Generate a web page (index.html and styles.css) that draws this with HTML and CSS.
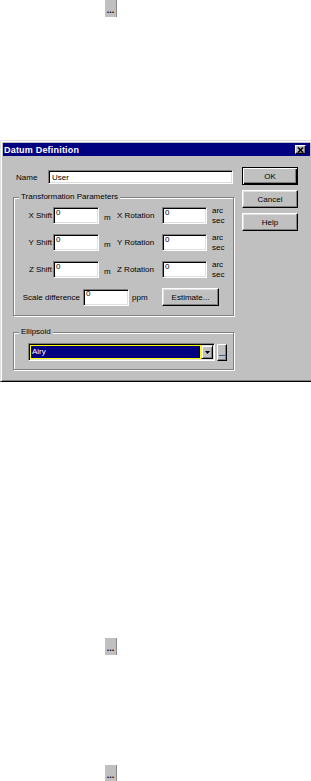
FILE: index.html
```html
<!DOCTYPE html>
<html lang="en">
<head>
    <meta charset="UTF-8">
    <meta name="viewport" content="width=device-width, initial-scale=1.0">
    <title>Datum Definition</title>
    <link rel="stylesheet" href="styles.css">
</head>
<body>
    <button class="more-btn more-top" type="button">...</button>

    <div class="dialog">
        <div class="titlebar">
            <span class="title">Datum Definition</span>
            <button class="close-btn" type="button" aria-label="Close">
                <svg width="7" height="6" viewBox="0 0 7 6"><path d="M1 0.5 L6 5.5 M6 0.5 L1 5.5" stroke="#000" stroke-width="1.6" fill="none"/></svg>
            </button>
        </div>
        <div class="dialog-body">
            <div class="main">
                <div class="name-row">
                    <label for="name">Name</label>
                    <input id="name" class="field field-name" value="User">
                </div>

                <div class="group group-params">
                    <div class="group-title">Transformation Parameters</div>
                    <div class="param-row">
                        <label class="lbl">X Shift</label>
                        <input class="field" value="0">
                        <span class="unit">m</span>
                        <label class="lbl-rot">X Rotation</label>
                        <input class="field field-rot" value="0">
                        <span class="arc">arc<br>sec</span>
                    </div>
                    <div class="param-row">
                        <label class="lbl">Y Shift</label>
                        <input class="field" value="0">
                        <span class="unit">m</span>
                        <label class="lbl-rot">Y Rotation</label>
                        <input class="field field-rot" value="0">
                        <span class="arc">arc<br>sec</span>
                    </div>
                    <div class="param-row">
                        <label class="lbl">Z Shift</label>
                        <input class="field" value="0">
                        <span class="unit">m</span>
                        <label class="lbl-rot">Z Rotation</label>
                        <input class="field field-rot" value="0">
                        <span class="arc">arc<br>sec</span>
                    </div>
                    <div class="param-row scale-row">
                        <label class="lbl-scale">Scale difference</label>
                        <input class="field" value="0">
                        <span class="unit-ppm">ppm</span>
                        <button class="btn btn-estimate" type="button">Estimate...</button>
                    </div>
                </div>

                <div class="group group-ellipsoid">
                    <div class="group-title">Ellipsoid</div>
                    <div class="ellipsoid-row">
                        <div class="combo">
                            <span class="combo-value">Airy</span>
                            <span class="combo-arrow">
                                <svg width="5" height="3" viewBox="0 0 5 3"><polygon points="0,0 5,0 2.5,3" fill="#000"/></svg>
                            </span>
                        </div>
                        <button class="small-btn" type="button">...</button>
                    </div>
                </div>
            </div>

            <div class="actions">
                <button class="btn btn-default" type="button">OK</button>
                <button class="btn" type="button">Cancel</button>
                <button class="btn" type="button">Help</button>
            </div>
        </div>
    </div>

    <button class="more-btn more-mid" type="button">...</button>
    <button class="more-btn more-bottom" type="button">...</button>
</body>
</html>
```

FILE: styles.css
```css
html, body {
    overflow: hidden;
}
body {
    margin: 0;
    background: #fff;
    font-family: "Liberation Sans", Arial, sans-serif;
    font-size: 8px;
    color: #000;
}
button, input {
    font-family: inherit;
    font-size: 8px;
    color: #000;
    margin: 0;
}

/* loose "..." buttons on the page */
.more-btn {
    display: block;
    width: 12px;
    height: 17px;
    margin-left: 105px;
    padding: 4px 0 0;
    border: none;
    border-right: 1px solid #8a8a8a;
    background: #c0c0c0;
    font-size: 9px;
    font-weight: bold;
    line-height: 9px;
    text-align: center;
}
.more-mid {
    margin-top: 256px;
}
.more-bottom {
    margin-top: 110px;
}

/* dialog frame */
.dialog {
    width: 313px;
    margin-top: 123px;
    box-sizing: border-box;
    padding: 2px;
    background: #c0c0c0;
    border: 1px solid;
    border-color: #dfdfdf #000 #000 #dfdfdf;
    box-shadow: inset 1px 1px #fff, inset -1px -1px #808080;
}
.titlebar {
    display: flex;
    align-items: center;
    justify-content: space-between;
    height: 13px;
    padding: 0 4px 0 1px;
    background: #000080;
}
.title {
    color: #fff;
    font-size: 9px;
    font-weight: bold;
    letter-spacing: 0.2px;
}
.close-btn {
    display: flex;
    align-items: center;
    justify-content: center;
    width: 11px;
    height: 9px;
    padding: 0;
    background: #c0c0c0;
    border: 1px solid;
    border-color: #fff #000 #000 #fff;
    box-shadow: inset -1px -1px #808080;
}

.dialog-body {
    display: flex;
    gap: 8px;
    padding: 11px 0 9px 10px;
}
.main {
    width: 221px;
}

/* sunken edit fields */
.field {
    box-sizing: border-box;
    width: 46px;
    height: 17px;
    padding: 0 2px 7px;
    background: #fff;
    border: 1px solid;
    border-color: #808080 #fff #fff #808080;
    box-shadow: inset 1px 1px #000, inset -1px -1px #dfdfdf;
    outline: none;
}

.name-row {
    display: flex;
    align-items: center;
    height: 14px;
    margin-top: 3px;
}
.name-row label {
    width: 35px;
    padding-left: 3px;
    box-sizing: border-box;
}
.field-name {
    width: 185px;
    height: 14px;
    padding: 0 3px;
}

/* etched group boxes */
.group {
    margin-top: 13px;
    border: 1px solid #808080;
    box-shadow: 1px 1px #fff, inset 1px 1px #fff;
}
.group-title {
    width: fit-content;
    margin: -6px 0 0 5px;
    padding: 0 2px;
    line-height: 10px;
    background: #c0c0c0;
}
.group-params {
    padding-bottom: 9px;
}
.group-ellipsoid {
    margin-top: 16px;
    padding-bottom: 8px;
}

.param-row {
    display: flex;
    align-items: center;
    height: 17px;
    margin-top: 10px;
}
.group-title + .param-row {
    margin-top: 5px;
}
.lbl {
    width: 39px;
    padding-right: 1px;
    box-sizing: border-box;
    text-align: right;
}
.unit {
    width: 18px;
    padding: 4px 0 0 5px;
    box-sizing: border-box;
}
.lbl-rot {
    width: 45px;
}
.field-rot {
    width: 45px;
}
.arc {
    margin-left: 5px;
    line-height: 10px;
}

.scale-row {
    height: 18px;
}
.lbl-scale {
    width: 69px;
    padding-right: 3px;
    box-sizing: border-box;
    text-align: right;
}
.unit-ppm {
    width: 33px;
    padding-left: 3px;
    box-sizing: border-box;
}

/* raised push buttons */
.btn {
    box-sizing: border-box;
    width: 56px;
    height: 18px;
    padding: 0;
    background: #c0c0c0;
    border: 1px solid;
    border-color: #fff #000 #000 #fff;
    box-shadow: inset -1px -1px #808080, inset 1px 1px #dfdfdf;
    text-align: center;
}
.btn-default {
    border-color: #000;
    box-shadow: inset 1px 1px #fff, inset -1px -1px #000, inset -2px -2px #808080;
}
.btn-estimate {
    width: 57px;
}
.actions {
    display: flex;
    flex-direction: column;
    gap: 5px;
}

/* ellipsoid combo */
.ellipsoid-row {
    display: flex;
    align-items: center;
    margin-top: 6px;
    padding-left: 14px;
}
.combo {
    display: flex;
    box-sizing: border-box;
    width: 187px;
    height: 18px;
    padding: 1px;
    background: #fff;
    border: 1px solid;
    border-color: #808080 #fff #fff #808080;
    box-shadow: inset 1px 1px #000, inset -1px -1px #dfdfdf;
}
.combo-value {
    flex: 1;
    padding-left: 1px;
    background: #000080;
    border: 1px solid #ffff00;
    color: #fff;
    line-height: 12px;
}
.combo-arrow {
    display: flex;
    align-items: center;
    justify-content: center;
    box-sizing: border-box;
    width: 12px;
    background: #c0c0c0;
    border: 1px solid;
    border-color: #dfdfdf #000 #000 #dfdfdf;
    box-shadow: inset 1px 1px #fff, inset -1px -1px #808080;
}
.small-btn {
    box-sizing: border-box;
    width: 10px;
    height: 17px;
    margin-left: 2px;
    padding: 3px 0 0;
    background: #c0c0c0;
    border: 1px solid;
    border-color: #fff #000 #000 #fff;
    box-shadow: inset -1px -1px #808080;
    font-size: 7px;
    font-weight: bold;
    line-height: 9px;
    text-align: center;
}
```
